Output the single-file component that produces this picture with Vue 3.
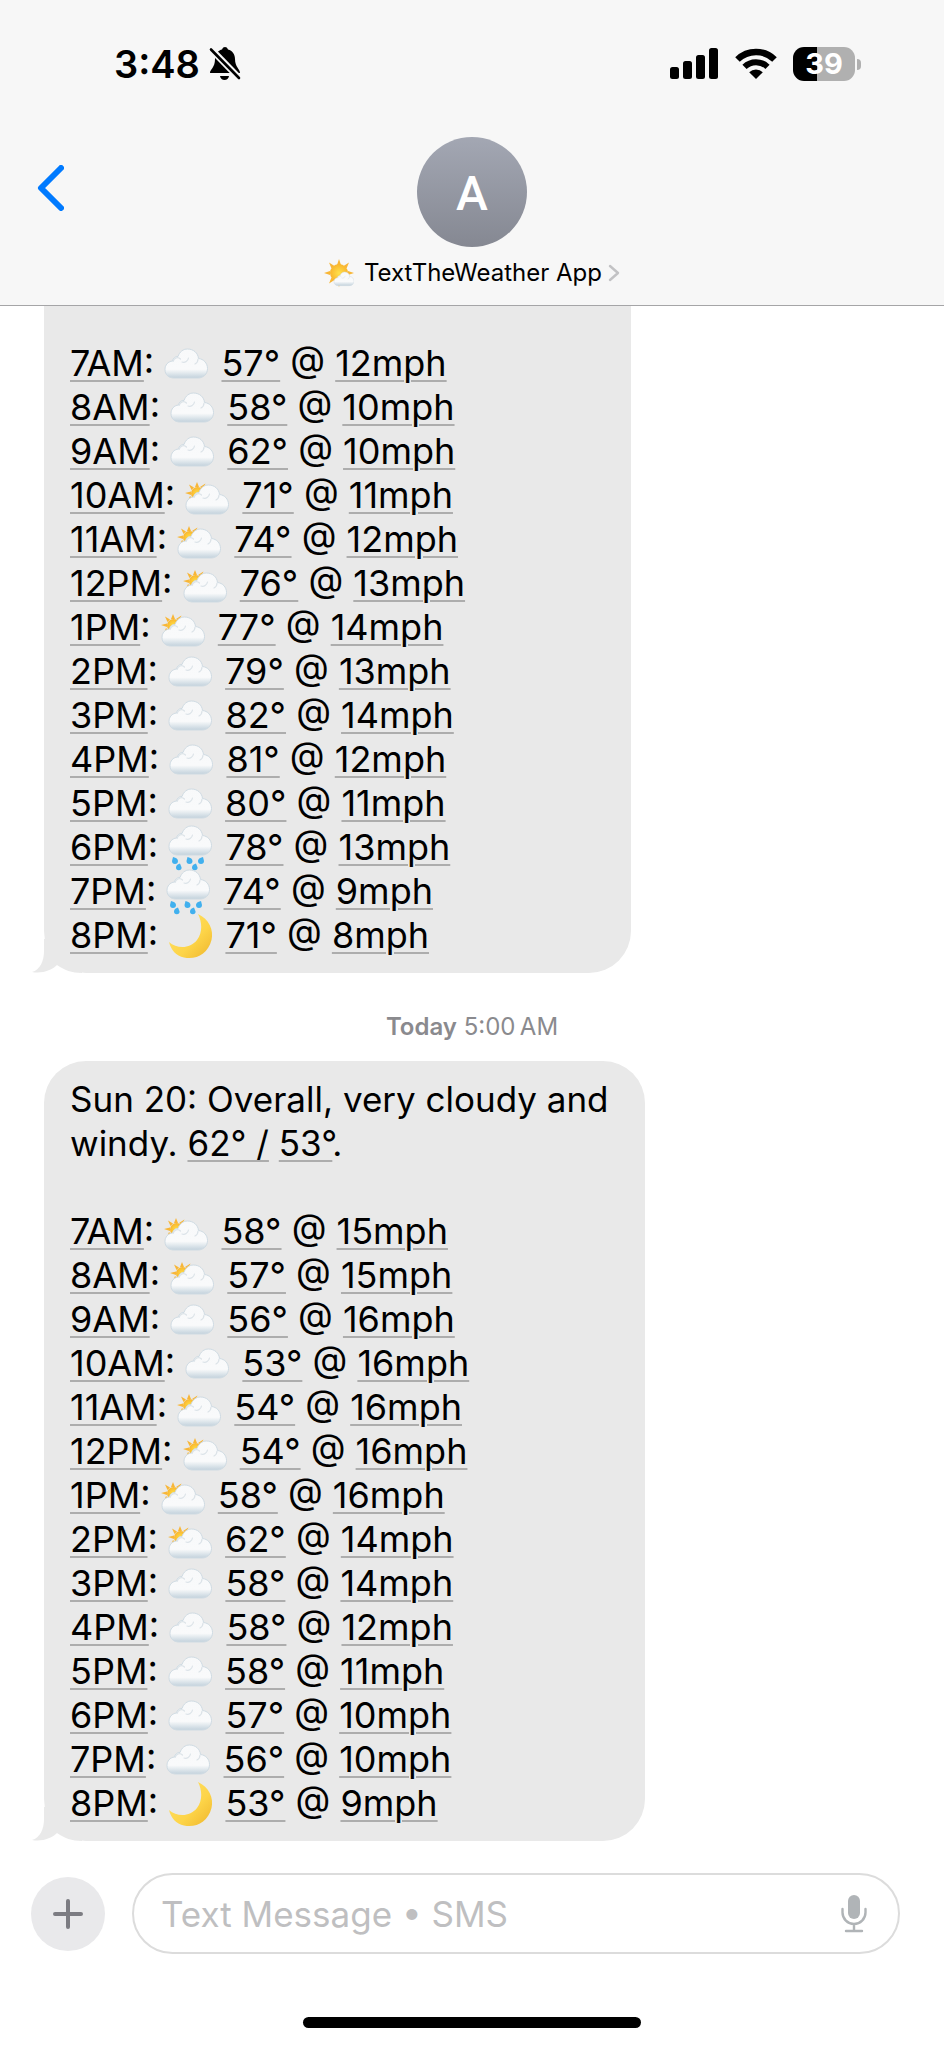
<script setup>
const first = [
  ['7AM', 'cloud', '57°', '12mph'],
  ['8AM', 'cloud', '58°', '10mph'],
  ['9AM', 'cloud', '62°', '10mph'],
  ['10AM', 'suncloud', '71°', '11mph'],
  ['11AM', 'suncloud', '74°', '12mph'],
  ['12PM', 'suncloud', '76°', '13mph'],
  ['1PM', 'suncloud', '77°', '14mph'],
  ['2PM', 'cloud', '79°', '13mph'],
  ['3PM', 'cloud', '82°', '14mph'],
  ['4PM', 'cloud', '81°', '12mph'],
  ['5PM', 'cloud', '80°', '11mph'],
  ['6PM', 'rain', '78°', '13mph'],
  ['7PM', 'rain', '74°', '9mph'],
  ['8PM', 'moon', '71°', '8mph'],
]
const second = [
  ['7AM', 'suncloud', '58°', '15mph'],
  ['8AM', 'suncloud', '57°', '15mph'],
  ['9AM', 'cloud', '56°', '16mph'],
  ['10AM', 'cloud', '53°', '16mph'],
  ['11AM', 'suncloud', '54°', '16mph'],
  ['12PM', 'suncloud', '54°', '16mph'],
  ['1PM', 'suncloud', '58°', '16mph'],
  ['2PM', 'suncloud', '62°', '14mph'],
  ['3PM', 'cloud', '58°', '14mph'],
  ['4PM', 'cloud', '58°', '12mph'],
  ['5PM', 'cloud', '58°', '11mph'],
  ['6PM', 'cloud', '57°', '10mph'],
  ['7PM', 'cloud', '56°', '10mph'],
  ['8PM', 'moon', '53°', '9mph'],
]
</script>

<template>
  <div class="phone">
    <svg class="defs" aria-hidden="true">
      <defs>
        <linearGradient id="gCloud" x1="0" y1="0" x2="0" y2="1">
          <stop offset="0" stop-color="#f8f9fa" />
          <stop offset="0.7" stop-color="#f9fafb" />
          <stop offset="1" stop-color="#c3d2dc" />
        </linearGradient>
        <linearGradient id="gMoon" x1="0" y1="0" x2="1" y2="1">
          <stop offset="0" stop-color="#ffe36a" />
          <stop offset="0.6" stop-color="#fdd448" />
          <stop offset="1" stop-color="#eeb52c" />
        </linearGradient>
        <radialGradient id="gSun">
          <stop offset="0" stop-color="#ffe14a" />
          <stop offset="1" stop-color="#f9b52d" />
        </radialGradient>
        <g id="cloudShape">
          <path d="M9 29C3.500 29 0 25.500 0 20.500C0 16 3 12.500 7.500 12C8 9 10.500 7.200 13 7.500C14.500 3 18 0 22.500 0C28.500 0 33 4 33.500 9.500C38.500 10 42.500 14 42.500 19.500C42.500 25 38.500 29 33 29Z" fill="url(#gCloud)" stroke="#cfdbe3" stroke-width="1" />
          <path d="M8 12.500C9 8.500 13 7.500 15.500 10M17 13C20 14 23 12 23.500 9M33 10C33 12 32 14 30 15" fill="none" stroke="#dce3e8" stroke-width="1.200" stroke-linecap="round" />
        </g>
      </defs>
    </svg>

    <header class="top">
      <div class="status">
        <div class="clock">
          <span>3:48</span>
          <svg width="32" height="34" viewBox="0 0 32 34" aria-label="Silent mode">
            <path d="M1 26C1 22 6 21 6 12C6 6.500 10 3 13 2.500C13.500 .8 14.800 0 16 0C17.200 0 18.500 .8 19 2.500C23.500 3.500 26 7.500 26 12C26 20 31 22 31 26Z" fill="#000" />
            <path d="M11 29H20C19.500 31.500 17.800 33 15.500 33C13.200 33 11.500 31.500 11 29Z" fill="#000" />
            <path d="M0 0L32 33" stroke="#f7f7f7" stroke-width="6.500" />
            <path d="M2 2.500L30 31" stroke="#000" stroke-width="2.600" stroke-linecap="round" />
          </svg>
        </div>
        <div class="signals">
          <svg width="49" height="32" viewBox="0 0 49 32" aria-label="Signal">
            <rect x="0" y="19" width="9" height="12" rx="2.500" />
            <rect x="13" y="13" width="9" height="18" rx="2.500" />
            <rect x="26" y="7" width="9" height="24" rx="2.500" />
            <rect x="39" y="0" width="9" height="31" rx="2.500" />
          </svg>
          <svg width="42" height="32" viewBox="0 0 42 32" aria-label="Wi-Fi">
            <path d="M2.500 11.500A26.500 26.500 0 0 1 39.500 11.500" fill="none" stroke="#000" stroke-width="6.500" />
            <path d="M9.500 18.800A16.500 16.500 0 0 1 32.500 18.800" fill="none" stroke="#000" stroke-width="6" />
            <path d="M21 31L14.200 24.200A9.600 9.600 0 0 1 27.800 24.200Z" />
          </svg>
          <div class="battery">
            <div class="cell">39</div>
            <i class="cap"></i>
          </div>
        </div>
      </div>
      <div class="nav">
        <button class="back" aria-label="Back">
          <svg width="27" height="46" viewBox="0 0 27 46">
            <path d="M24 3L4 23L24 43" fill="none" stroke="#007aff" stroke-width="6" stroke-linecap="round" stroke-linejoin="round" />
          </svg>
        </button>
        <button class="contact">
          <span class="avatar">A</span>
          <span class="who">
            <svg width="30" height="28" viewBox="0 0 30 28">
              <path d="M15 0L17 6H13ZM5 3.500L10.500 7L7.500 9.500ZM25 3.500L22.500 9.500L19.500 7ZM0 14L6 12V16ZM30 14L24 12V16ZM5 24.500L7.500 18.500L10.500 21ZM15 28L13 22H17Z" fill="#f8b637" />
              <circle cx="15" cy="14" r="9" fill="url(#gSun)" />
              <use href="#cloudShape" transform="translate(10 13) scale(.47)" />
            </svg>
            <span>TextTheWeather App</span>
            <svg class="chev" width="12" height="18" viewBox="0 0 12 18">
              <path d="M2 2L10 9L2 16" fill="none" stroke="#c2c2c4" stroke-width="2.400" stroke-linecap="round" stroke-linejoin="round" />
            </svg>
          </span>
        </button>
      </div>
    </header>

    <main class="thread">
      <article v-for="(rows, m) in [first, second]" :key="m" class="message">
        <p v-if="m === 1" class="stamp"><b>Today</b> 5:00&#8239;AM</p>
        <div class="bubble" :class="m === 0 ? 'cut' : 'full'">
          <p v-if="m === 1" class="summary">Sun 20: Overall, very cloudy and windy. <a href="#">62° /</a> <a href="#">53°</a>.</p>
          <p v-for="r in rows" :key="r[0]" class="row">
            <a href="#">{{ r[0] }}</a>:
            <svg class="emoji" width="47" height="44" viewBox="3 0 47 44">
              <use v-if="r[1] === 'cloud'" href="#cloudShape" x="4" y="8" />
              <g v-else-if="r[1] === 'suncloud'">
                <path d="M15 9L17 14H13ZM7 11.500L12 14.500L9.500 17ZM23.500 10.500L21 16L18 14ZM3 20L9 18.500V22ZM6 28L8 23L11 26Z" fill="#f8b637" />
                <circle cx="15.500" cy="20.500" r="6.500" fill="url(#gSun)" />
                <use href="#cloudShape" x="4" y="12" />
              </g>
              <g v-else-if="r[1] === 'rain'">
                <use href="#cloudShape" x="4" y="1" />
                <path d="M8 32q5 1 5 4a3 3 0 0 1-6 0zM22.500 32q5 1 5 4a3 3 0 0 1-6 0zM38 32q-5 1-5 4a3 3 0 0 0 6 0zM15 38.500q-4 1-4 4a2.800 2.800 0 0 0 5.600 0zM31 38.500q-4 1-4 4a2.800 2.800 0 0 0 5.600 0z" fill="#41b0ee" />
              </g>
              <path v-else d="M33 1C44 6 49 17 46.500 27C43 41 31 47 19 44.500C11 43 6 37 4 29C12 36 25 36 32 27C38 19 37 9 33 1Z" fill="url(#gMoon)" />
            </svg>
            {{ ' ' }}<a href="#">{{ r[2] }}</a> @ <a href="#">{{ r[3] }}</a>
          </p>
          <svg class="tail" width="50" height="34" viewBox="0 0 50 34">
            <path d="M12 0V12C12 22 8 31 0 33C10 35 20 31 25 26C32 31 40 34 50 34V0Z" fill="#e9e9e9" />
          </svg>
        </div>
      </article>
    </main>

    <footer class="composer">
      <button class="plus" aria-label="Add">
        <svg width="30" height="30" viewBox="0 0 30 30">
          <path d="M15 2V28M2 15H28" stroke="#7c7c82" stroke-width="4" stroke-linecap="round" />
        </svg>
      </button>
      <div class="field">
        <input type="text" aria-label="Message" placeholder="Text Message • SMS" />
        <button class="mic" aria-label="Dictate">
          <svg width="26" height="38" viewBox="0 0 26 38">
            <rect x="7" y="0" width="12" height="24" rx="6" fill="#b0b4b7" />
            <path d="M1.500 14V17.500A11.500 11.500 0 0 0 24.500 17.500V14M13 29V35.500M5 36H21" fill="none" stroke="#b0b4b7" stroke-width="2.400" stroke-linecap="round" />
          </svg>
        </button>
      </div>
    </footer>
    <div class="home"><i></i></div>
  </div>
</template>

<style>
body {
  margin: 0;
  background: #fff;
}
</style>

<style scoped>
.phone {
  box-sizing: border-box;
  min-height: 100vh;
  display: flex;
  flex-direction: column;
  font-family: Inter, "Liberation Sans", sans-serif;
  color: #000;
  background: #fff;
}
.defs {
  position: absolute;
  width: 0;
  height: 0;
}
button {
  border: 0;
  padding: 0;
  margin: 0;
  background: none;
  font: inherit;
  color: inherit;
  cursor: pointer;
}
p {
  margin: 0;
}
svg {
  display: block;
  flex: none;
}
.top {
  background: #f7f7f7;
  border-bottom: 1px solid #a5a5a7;
  padding-bottom: 16px;
}
.status {
  display: flex;
  justify-content: space-between;
  align-items: center;
  height: 128px;
  padding: 0 83px 0 114px;
}
.clock,
.signals {
  display: flex;
  align-items: center;
}
.clock {
  gap: 9px;
  font-size: 38px;
  font-weight: 600;
}
.signals {
  gap: 16px;
}
.battery {
  display: flex;
  align-items: center;
  gap: 2px;
}
.cell {
  width: 62px;
  height: 34px;
  line-height: 34px;
  border-radius: 11px;
  background: linear-gradient(90deg, #000 39%, #b0b0b0 39%);
  color: #fff;
  font-size: 29px;
  font-weight: 700;
  text-align: center;
}
.cap {
  width: 4px;
  height: 11px;
  border-radius: 0 4px 4px 0;
  background: #b0b0b0;
}
.nav {
  display: grid;
  grid-template-columns: 1fr auto 1fr;
  align-items: start;
  padding: 9px 37px 0;
}
.back {
  justify-self: start;
  margin-top: 28px;
}
.contact {
  display: flex;
  flex-direction: column;
  align-items: center;
  gap: 10px;
}
.avatar {
  width: 110px;
  height: 110px;
  border-radius: 50%;
  background: linear-gradient(#a3a7b3, #858892);
  color: #fff;
  font: 500 48px/114px Roboto, Inter, sans-serif;
  text-align: center;
}
.who {
  display: flex;
  align-items: center;
  gap: 10px;
  font-size: 24px;
  line-height: 32px;
}
.chev {
  margin-left: -4px;
}
.message {
  padding: 0 44px;
}
.bubble {
  position: relative;
  isolation: isolate;
  box-sizing: border-box;
  width: 100%;
  padding: 16px 26px;
  border-radius: 42px;
  background: #e9e9e9;
  font-size: 36px;
  line-height: 44px;
}
.cut {
  max-width: 587px;
  padding-top: 35px;
  border-top-left-radius: 0;
  border-top-right-radius: 0;
}
.full {
  max-width: 601px;
}
.summary {
  margin-bottom: 44px;
  font-size: 35px;
}
.row {
  height: 44px;
  white-space: nowrap;
}
.bubble a {
  color: inherit;
  text-decoration: underline;
  text-decoration-color: #adadad;
  text-decoration-thickness: 2px;
  text-underline-offset: 4px;
}
.emoji {
  display: inline-block;
  vertical-align: top;
  overflow: visible;
}
.tail {
  position: absolute;
  z-index: -1;
  left: -12px;
  bottom: 0;
}
.stamp {
  padding: 41px 0 21px;
  text-align: center;
  font-size: 24px;
  line-height: 26px;
  color: #8a8a8e;
}
.stamp b {
  font-weight: 600;
}
.composer {
  display: flex;
  align-items: center;
  gap: 27px;
  padding: 32px 44px 0 31px;
}
.plus {
  display: grid;
  place-items: center;
  width: 74px;
  height: 74px;
  border-radius: 50%;
  background: #e9e9eb;
}
.field {
  flex: 1;
  display: flex;
  align-items: center;
  box-sizing: border-box;
  height: 81px;
  padding: 0 31px 0 27px;
  border: 2px solid #dcdcdc;
  border-radius: 41px;
}
.field input {
  flex: 1;
  min-width: 0;
  padding: 0;
  border: 0;
  outline: 0;
  background: none;
  font: 35px/44px Inter, "Liberation Sans", sans-serif;
}
.field input::placeholder {
  color: #bfbfc1;
  opacity: 1;
}
.home {
  display: flex;
  justify-content: center;
  padding: 63px 0 16px;
}
.home i {
  width: 338px;
  height: 11px;
  border-radius: 6px;
  background: #000;
}
</style>
